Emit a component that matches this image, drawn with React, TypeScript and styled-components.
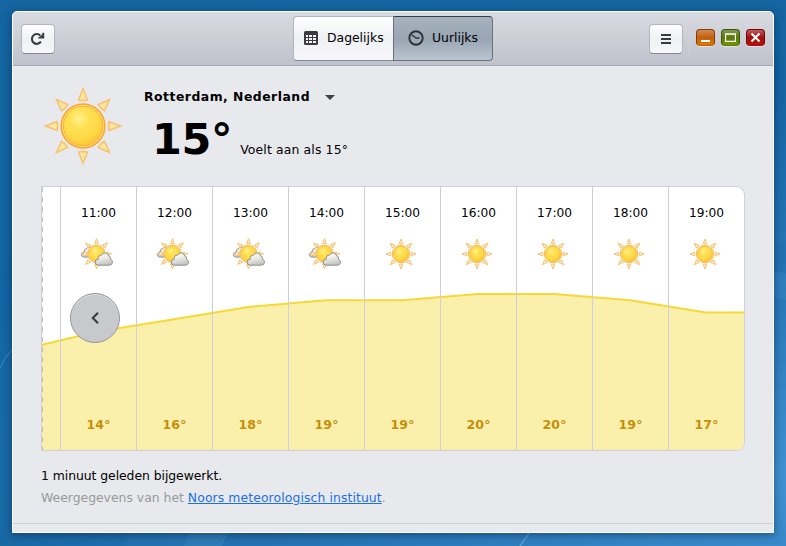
import React, { useId } from "react";
import styled, { createGlobalStyle, css } from "styled-components";

const GlobalStyle = createGlobalStyle`
  * { box-sizing: border-box; }
  html, body { margin: 0; height: 100%; overflow: hidden; }
  body { font: 12px/16px "DejaVu Sans", sans-serif; color: #000; }
  button { font: inherit; color: inherit; margin: 0; padding: 0; }
  svg { display: block; flex: none; }
`;

const Desktop = styled.div`
  position: relative;
  width: 786px;
  height: 546px;
  padding: 11px 12px 13px;
  background:
    radial-gradient(ellipse 900px 400px at 100% 88%, #4092d0 0%, rgba(50, 130, 195, 0.7) 45%, rgba(20, 100, 160, 0) 100%),
    linear-gradient(180deg, #1465a1 0%, #1264a3 55%, #14649f 100%);
`;

const Wallpaper = styled.svg`
  position: absolute;
  inset: 0;
`;

const Window = styled.main`
  position: relative;
  display: flex;
  flex-direction: column;
  width: 762px;
  height: 522px;
  border: 1px solid #fff;
  border-radius: 5px 5px 0 0;
  background: #e8e9ed;
  box-shadow: 0 2px 9px rgba(0, 25, 55, 0.5);
`;

const HeaderBar = styled.header`
  display: grid;
  grid-template-columns: 1fr 200px 1fr;
  align-items: center;
  height: 54px;
  padding: 0 8px;
  border-bottom: 1px solid #a9a9b7;
  border-radius: 4px 4px 0 0;
  background: linear-gradient(#dadbe1, #c0c2cc);
`;

const raised = css`
  border: 1px solid #b3b4c3;
  border-bottom-color: #81859b;
  background: linear-gradient(#fff 0%, #f0f1f4 48%, #f7f7f9 100%);
`;

const IconButton = styled.button`
  ${raised}
  display: flex;
  align-items: center;
  justify-content: center;
  width: 34px;
  height: 30px;
  border-radius: 4px;
`;

const Switcher = styled.div`
  display: flex;
  height: 46px;
`;

const Tab = styled.button<{ $active?: boolean }>`
  ${raised}
  display: flex;
  align-items: center;
  width: 100px;
  height: 45px;
  padding-left: 10px;
  gap: 9px;
  font-size: 12.4px;
  border-right: 0;
  border-radius: 4px 0 0 4px;
  ${(p) => p.$active && css`
    padding-left: 14px;
    gap: 8px;
    border: 1px solid #66737f;
    border-top-color: #343d46;
    border-radius: 0 4px 4px 0;
    background: linear-gradient(#a8b2bf 0%, #98a5b2 50%, #b9c4cf 100%);
  `}
`;

const Controls = styled.div`
  display: flex;
  align-items: center;
  justify-content: flex-end;
`;

const Divider = styled.span`
  width: 1px;
  height: 37px;
  margin: 0 6px 0 6px;
  background: #d0d1d8;
`;

const WindowButtons = styled.div`
  display: flex;
  gap: 6px;
  margin-top: -2px;
`;

const WindowButton = styled.button<{ $from: string; $mid: string; $to: string; $edge: string }>`
  display: flex;
  align-items: center;
  justify-content: center;
  width: 19px;
  height: 17px;
  border: 1px solid ${(p) => p.$edge};
  border-bottom-color: ${(p) => p.$mid};
  border-radius: 4px;
  background: linear-gradient(${(p) => p.$from} 0%, ${(p) => p.$mid} 50%, ${(p) => p.$to} 100%);
  box-shadow: 0 1px 0 rgba(255, 255, 255, 0.5);
`;

const Current = styled.section`
  display: flex;
  height: 120px;
  padding: 20px 0 0 30px;
`;

const CurrentText = styled.div`
  margin-left: 21px;
  padding-top: 3px;
`;

const Place = styled.div`
  display: flex;
  align-items: center;
  gap: 15px;
  height: 16px;
  font-weight: 700;
  font-size: 12.4px;
  letter-spacing: 0.5px;
`;

const Reading = styled.div`
  display: flex;
  align-items: baseline;
  gap: 8px;
  padding: 9px 0 0 8px;
`;

const Degrees = styled.strong`
  font-size: 43px;
  line-height: 50px;
  letter-spacing: -0.4px;
`;

const FeelsLike = styled.span`
  font-size: 12.4px;
  letter-spacing: 0.15px;
`;

const Chart = styled.section`
  position: relative;
  display: flex;
  width: 704px;
  height: 265px;
  margin-left: 28px;
  border: 1px solid #cfcfd9;
  border-radius: 0 9px 9px 0;
  background: #fff;
  overflow: hidden;
`;

const Curve = styled.svg`
  position: absolute;
  left: 0;
  top: 0;
`;

const Hour = styled.div`
  position: relative;
  display: flex;
  flex-direction: column;
  align-items: center;
  width: 76px;
  height: 100%;
  padding-top: 18px;
  border-right: 1px solid #cfcfd9;
  &:last-of-type { width: 75px; border-right: 0; }
`;

const PastHour = styled.div`
  position: relative;
  width: 19px;
  height: 100%;
  border-right: 1px solid #cfcfd9;
`;

const HourTime = styled.span`
  font-size: 12.2px;
`;

const WeatherIcon = styled.div`
  margin: 16.5px 2.5px 0 0;
`;

const HourTemp = styled.b`
  margin-top: 147.5px;
  color: #c68e09;
  font-size: 12.5px;
  letter-spacing: 0.2px;
`;

const BackButton = styled.button`
  position: absolute;
  left: 28px;
  top: 106px;
  display: flex;
  align-items: center;
  justify-content: center;
  width: 50px;
  height: 50px;
  border: 1px solid #95969a;
  border-radius: 50%;
  background: #c8c9cd;
  box-shadow: inset 0 1px 0 #dfe0e3;
`;

const Notes = styled.footer`
  display: flex;
  flex-direction: column;
  height: 73px;
  padding: 17px 28px 0;
  border-bottom: 1px solid #cfd0d5;
  font-size: 12.4px;
`;

const Updated = styled.div`
  letter-spacing: -0.05px;
`;

const Credit = styled.div`
  margin-top: 6px;
  color: #999998;
`;

const Link = styled.a`
  color: #1b6fe4;
  text-decoration: underline;
  letter-spacing: 0.1px;
`;

const ANGLES = [0, 45, 90, 135, 180, 225, 270, 315];

function SunShape({ small }: { small?: boolean }) {
  const id = useId();
  return (
    <g>
      <defs>
        <radialGradient id={id} cx="0.4" cy="0.32" r="0.7">
          <stop offset="0" stopColor="#fff18e" />
          <stop offset="0.35" stopColor="#ffe155" />
          <stop offset="0.75" stopColor="#fed845" />
          <stop offset="1" stopColor="#fdc235" />
        </radialGradient>
      </defs>
      {ANGLES.map((a) => (
        <path
          key={a}
          d="M0-37.5 L4.4-26 Q0-24.8-4.4-26Z"
          transform={`rotate(${a})`}
          fill={small ? "#fff3cd" : "#fae99d"}
          stroke="#f9bf72"
          strokeWidth={small ? 2.5 : 1.5}
        />
      ))}
      <circle r="21.8" fill="#ffe98b" stroke="#fba932" strokeWidth={small ? 2 : 1.7} />
      <circle r={small ? 18.6 : 19.7} fill={`url(#${id})`} stroke="#fbb13a" strokeWidth={small ? 1.6 : 1} />
    </g>
  );
}

const CLOUD = "M3.5 13 Q.6 12.6 .7 9.8 Q1 7.2 3.8 7 Q3.6 2.8 7.2 2.8 Q8.4 .7 11 .8 Q14 1 14.5 4.1 Q16.6 4.2 16.2 7 Q18.5 8 18 10.5 Q17.5 13 15 13Z";

function PartlyCloudy() {
  const id = useId();
  return (
    <svg width="34" height="32" viewBox="0 0 34 32">
      <defs>
        <linearGradient id={id} x2="0.3" y2="1">
          <stop stopColor="#fff" />
          <stop offset="0.5" stopColor="#ececea" />
          <stop offset="1" stopColor="#c6c6c3" />
        </linearGradient>
      </defs>
      <path d={CLOUD} transform="translate(.8 8.2) scale(.84)" fill={`url(#${id})`} stroke="#8b8b88" strokeWidth="1.1" />
      <g transform="translate(16.5 15.7) scale(.4)"><SunShape small /></g>
      <path d={CLOUD} transform="translate(14.4 14.2)" fill={`url(#${id})`} stroke="#868684" strokeWidth="0.9" />
    </svg>
  );
}

const Sun = ({ size }: { size: number }) => (
  <svg width={size} height={size} viewBox="-40 -40 80 80"><SunShape small={size < 40} /></svg>
);

const HOURS: [string, number, boolean][] = [
  ["11:00", 14, true], ["12:00", 16, true], ["13:00", 18, true], ["14:00", 19, true],
  ["15:00", 19, false], ["16:00", 20, false], ["17:00", 20, false], ["18:00", 19, false], ["19:00", 17, false],
];

const LINE = "M-19 162.3 L56 144.5 L132 132.2 L208 119.8 L284 113.2 H360 L436 107 H512 L588 113.2 L664 125.6 H710";

export default function App() {
  return (
    <>
      <GlobalStyle />
      <Desktop>
        <Wallpaper width="786" height="546" viewBox="0 0 786 546">
          <path d="M124 546L132 532H190L184 546Z" fill="#3d88bf" fillOpacity=".15" />
          <path d="M184 546L190 532H228L222 546Z" fill="#6aafdd" fillOpacity=".18" />
          <path d="M520 546L530 532" stroke="#73b5e3" strokeOpacity=".6" strokeWidth="1.5" />
          <path d="M0 368Q5 356 12 350" fill="none" stroke="#6aafdd" strokeOpacity=".5" />
          <path d="M770 240L786 246V272L770 270Z" fill="#0f5c99" fillOpacity=".1" />
          <path d="M770 270L786 274V300L770 296Z" fill="#6aafdd" fillOpacity=".12" />
        </Wallpaper>
        <Window>
          <HeaderBar>
            <IconButton aria-label="Vernieuwen">
              <svg width="16" height="16" viewBox="0 0 16 16">
                <path d="M10.9 10.7 A4.9 4.9 0 1 1 10.4 4.6" fill="none" stroke="#3b3b3c" strokeWidth="2.1" />
                <path d="M14.2 1.8 V7.4 H8.2 V6.5 L10 5.4 L12.4 3.2 V1.8Z" fill="#3b3b3c" />
              </svg>
            </IconButton>
            <Switcher>
              <Tab>
                <svg width="14" height="14" viewBox="0 0 14 14">
                  <rect width="14" height="14" rx="1.6" fill="#3b3b3c" />
                  <path d="M2 4h2v2H2zM5 4h3v2H5zM9 4h3v2H9zM2 7h2v2H2zM5 7h3v2H5zM9 7h3v2H9zM2 10h2v2H2zM5 10h3v2H5zM9 10h3v2H9z" fill="#f5f5f7" />
                </svg>
                Dagelijks
              </Tab>
              <Tab $active>
                <svg width="16" height="16" viewBox="0 0 16 16">
                  <circle cx="8" cy="8" r="6.7" fill="none" stroke="#2c3135" strokeWidth="1.9" />
                  <path d="M3.8 4.8 L8 8 H11.4" fill="none" stroke="#2c3135" strokeWidth="1.3" />
                </svg>
                Uurlijks
              </Tab>
            </Switcher>
            <Controls>
              <IconButton aria-label="Menu">
                <svg width="10" height="10" viewBox="0 0 10 10">
                  <path d="M0 1H10M0 5H10M0 9H10" stroke="#3b3b3c" strokeWidth="2" />
                </svg>
              </IconButton>
              <Divider />
              <WindowButtons>
                <WindowButton aria-label="Minimaliseren" $from="#cf8a54" $mid="#c1600c" $to="#dd7c00" $edge="#853c0c">
                  <svg width="11" height="11" viewBox="0 0 11 11"><path d="M1 9H10" stroke="#fff" strokeWidth="2" /></svg>
                </WindowButton>
                <WindowButton aria-label="Maximaliseren" $from="#829650" $mid="#5c780a" $to="#729800" $edge="#3f5208">
                  <svg width="11" height="9" viewBox="0 0 11 9"><path d="M.5 1V8.5H10.5V1M0 1H11" fill="none" stroke="#fff" strokeWidth="1.3" /></svg>
                </WindowButton>
                <WindowButton aria-label="Sluiten" $from="#c05c5c" $mid="#a11212" $to="#bd1006" $edge="#720707">
                  <svg width="11" height="11" viewBox="0 0 11 11"><path d="M1.5 1.5L9.5 9.5M9.5 1.5L1.5 9.5" stroke="#fff" strokeWidth="2" /></svg>
                </WindowButton>
              </WindowButtons>
            </Controls>
          </HeaderBar>
          <Current>
            <Sun size={80} />
            <CurrentText>
              <Place>
                Rotterdam, Nederland
                <svg width="10" height="5" viewBox="0 0 10 5"><path d="M0 0H10L5 5Z" fill="#3d4143" /></svg>
              </Place>
              <Reading>
                <Degrees>15°</Degrees>
                <FeelsLike>Voelt aan als 15°</FeelsLike>
              </Reading>
            </CurrentText>
          </Current>
          <Chart>
            <Curve width="702" height="263" viewBox="0 0 702 263">
              <path d={`${LINE} V264 H-19Z`} fill="#faf0ac" />
              <path d={LINE} fill="none" stroke="#f6d836" strokeWidth="2" />
              <path d="M.5 0V263" stroke="#aaa690" strokeOpacity=".65" strokeDasharray="5 5" />
            </Curve>
            <PastHour />
            {HOURS.map(([time, temp, cloudy]) => (
              <Hour key={time}>
                <HourTime>{time}</HourTime>
                <WeatherIcon>{cloudy ? <PartlyCloudy /> : <Sun size={32} />}</WeatherIcon>
                <HourTemp>{temp}°</HourTemp>
              </Hour>
            ))}
            <BackButton aria-label="Vorige uren">
              <svg width="8" height="12" viewBox="0 0 8 12"><path d="M7 .8L1.8 6L7 11.2" fill="none" stroke="#3b3b3c" strokeWidth="2.1" /></svg>
            </BackButton>
          </Chart>
          <Notes>
            <Updated>1 minuut geleden bijgewerkt.</Updated>
            <Credit>Weergegevens van het <Link>Noors meteorologisch instituut</Link>.</Credit>
          </Notes>
        </Window>
      </Desktop>
    </>
  );
}
